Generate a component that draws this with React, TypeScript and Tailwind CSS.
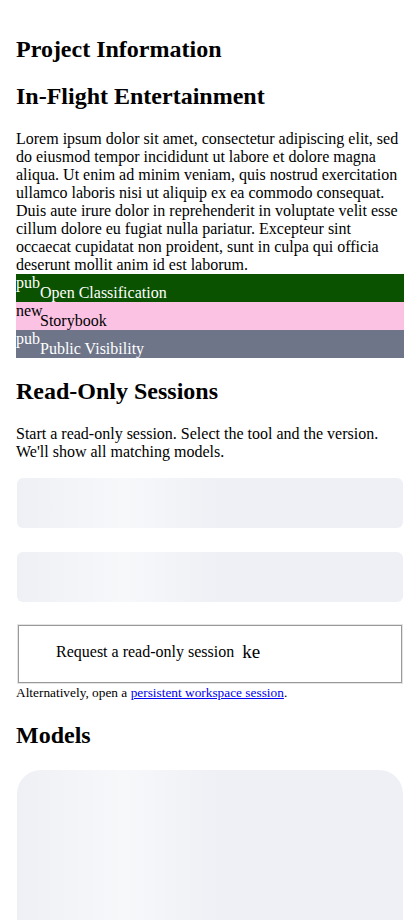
const SERIF = "font-['Liberation_Serif','Times_New_Roman',serif]";

const SHIMMER =
  'bg-[linear-gradient(90deg,#eef0f5_0%,#f7f8fa_28%,#eff0f5_52%,#eff0f5_100%)]';

const tags = [
  { code: 'pub', label: 'Open Classification', tone: 'bg-[#0b5200] text-white' },
  { code: 'new', label: 'Storybook', tone: 'bg-[#fbc2e4] text-black' },
  { code: 'pub', label: 'Public Visibility', tone: 'bg-[#6e7589] text-white' },
];

function Heading({ children, className = 'my-[20px]' }: { children: React.ReactNode; className?: string }) {
  return (
    <h2 className={`${className} text-[24px] font-bold leading-[normal]`}>{children}</h2>
  );
}

export default function App() {
  return (
    <div className={`${SERIF} h-[920px] overflow-hidden bg-white px-4 pt-4 text-black`}>
      <Heading>Project Information</Heading>
      <Heading>In-Flight Entertainment</Heading>
      <p className="text-[16px] leading-[normal]">
        Lorem ipsum dolor sit amet, consectetur adipiscing elit, sed do eiusmod tempor
        incididunt ut labore et dolore magna aliqua. Ut enim ad minim veniam, quis nostrud
        exercitation ullamco laboris nisi ut aliquip ex ea commodo consequat. Duis aute irure
        dolor in reprehenderit in voluptate velit esse cillum dolore eu fugiat nulla pariatur.
        Excepteur sint occaecat cupidatat non proident, sunt in culpa qui officia deserunt
        mollit anim id est laborum.
      </p>

      <div className="flex flex-col">
        {tags.map((t) => (
          <div key={t.label} className={`flex h-7 items-start text-[16px] leading-[normal] ${t.tone}`}>
            <span className="w-6 shrink-0 whitespace-nowrap">{t.code}</span>
            <span className="pt-[10px]">{t.label}</span>
          </div>
        ))}
      </div>

      <Heading>Read-Only Sessions</Heading>
      <p className="text-[16px] leading-[normal]">
        Start a read-only session. Select the tool and the version. We'll show all matching
        models.
      </p>

      <div className="mt-[17px] flex flex-col gap-6 px-px">
        <div className={`h-[50px] rounded-md ${SHIMMER}`} />
        <div className={`h-[50px] rounded-md ${SHIMMER}`} />
      </div>

      <button
        type="button"
        className={`${SERIF} mx-[2px] mt-[23px] flex h-[58px] w-[calc(100%-4px)] items-center border border-[#9a9a9a] pb-[4px] pl-[37px] text-left text-black shadow-[0_0_0_1px_#e4e4e4]`}
      >
        <span className="text-[16px]">Request a read-only session</span>
        <span className="ml-[8px] text-[19px]">ke</span>
      </button>
      <p className="mt-[2px] text-[13.33px] leading-[normal]">
        Alternatively, open a{' '}
        <a href="#" className="text-[#0000ee] underline">
          persistent workspace session
        </a>
        .
      </p>

      <Heading className="mt-[21px] mb-[21px]">Models</Heading>
      <div className={`mx-px h-[220px] rounded-3xl ${SHIMMER}`} />
    </div>
  );
}
